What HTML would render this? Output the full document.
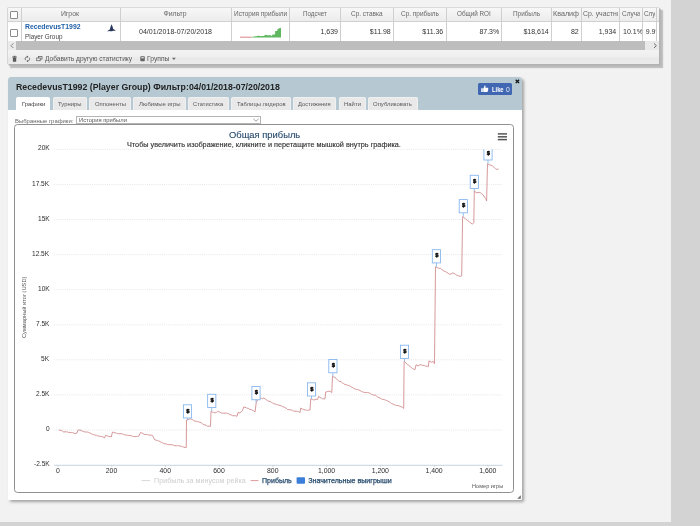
<!DOCTYPE html>
<html><head><meta charset="utf-8"><title>stats</title>
<style>
html,body{margin:0;padding:0;}
body{width:700px;height:526px;position:relative;overflow:hidden;background:#d3d3d3;font-family:"Liberation Sans",sans-serif;}
.t{position:absolute;white-space:nowrap;transform-origin:0 50%;}
.r{position:absolute;}
#w{position:absolute;left:0;top:0;width:700px;height:526px;will-change:transform;}
</style></head><body>
<div id="w">
<div class="r" style="left:0.00px;top:0.00px;width:671.00px;height:521.70px;background:#f2f2f2;"></div>
<div class="r" style="left:7.30px;top:6.70px;width:652.10px;height:57.70px;background:#ececec;border-top:1px solid #dadada;border-left:1px solid #d6d6d6;box-sizing:border-box;border-radius:1.5px 0 0 0;box-shadow:1.6px 1.6px 0.3px #b2b2b2,3.2px 3.2px 1.2px #bcbcbc;"></div>
<div class="r" style="left:8.00px;top:7.80px;width:651.40px;height:14.10px;background:linear-gradient(#f7f7f7,#ececec);border-bottom:1px solid #d0d0d0;box-sizing:border-box;"></div>
<div class="r" style="left:8.00px;top:21.90px;width:651.40px;height:19.20px;background:#fff;"></div>
<div class="r" style="left:8.00px;top:41.10px;width:651.40px;height:8.70px;background:#bdbdbd;"></div>
<div class="r" style="left:8.00px;top:41.10px;width:8.40px;height:8.70px;background:#ebebeb;"></div>
<div class="r" style="left:644.80px;top:41.10px;width:14.60px;height:8.70px;background:#e9e9e9;"></div>
<div class="r" style="left:8.00px;top:49.80px;width:651.40px;height:14.60px;background:linear-gradient(#f3f3f3 0%,#eeeeee 50%,#e8e8e8 58%,#ebebeb 100%);"></div>
<div class="r" style="left:20.90px;top:8.00px;width:1.00px;height:33.00px;background:#cfcfcf;"></div>
<div class="r" style="left:119.50px;top:8.00px;width:1.00px;height:33.00px;background:#cfcfcf;"></div>
<div class="r" style="left:230.80px;top:8.00px;width:1.00px;height:33.00px;background:#cfcfcf;"></div>
<div class="r" style="left:289.00px;top:8.00px;width:1.00px;height:33.00px;background:#cfcfcf;"></div>
<div class="r" style="left:339.50px;top:8.00px;width:1.00px;height:33.00px;background:#cfcfcf;"></div>
<div class="r" style="left:392.50px;top:8.00px;width:1.00px;height:33.00px;background:#cfcfcf;"></div>
<div class="r" style="left:445.75px;top:8.00px;width:1.00px;height:33.00px;background:#cfcfcf;"></div>
<div class="r" style="left:500.75px;top:8.00px;width:1.00px;height:33.00px;background:#cfcfcf;"></div>
<div class="r" style="left:550.75px;top:8.00px;width:1.00px;height:33.00px;background:#cfcfcf;"></div>
<div class="r" style="left:580.75px;top:8.00px;width:1.00px;height:33.00px;background:#cfcfcf;"></div>
<div class="r" style="left:619.00px;top:8.00px;width:1.00px;height:33.00px;background:#cfcfcf;"></div>
<div class="r" style="left:642.00px;top:8.00px;width:1.00px;height:33.00px;background:#cfcfcf;"></div>
<div class="r" style="left:655.90px;top:8.00px;width:1.00px;height:33.00px;background:#cfcfcf;"></div>
<div class="r" style="left:10.10px;top:11.00px;width:7.90px;height:7.80px;background:#fff;border:1px solid #8c8c8c;box-sizing:border-box;border-radius:1px;"></div>
<div class="r" style="left:10.10px;top:29.00px;width:7.90px;height:7.80px;background:#fff;border:1px solid #8c8c8c;box-sizing:border-box;border-radius:1px;"></div>
<div class="t" style="left:60.91px;top:10.33px;font-size:6.9px;line-height:7.93px;color:#666;">Игрок</div>
<div class="t" style="left:163.41px;top:10.33px;font-size:6.9px;line-height:7.93px;color:#666;">Фильтр</div>
<div class="t" style="left:233.75px;top:10.33px;font-size:6.9px;line-height:7.93px;color:#666;transform:scaleX(0.9359);">История прибыли</div>
<div class="t" style="left:303.00px;top:10.33px;font-size:6.9px;line-height:7.93px;color:#666;transform:scaleX(0.9088);">Подсчет</div>
<div class="t" style="left:351.00px;top:10.33px;font-size:6.9px;line-height:7.93px;color:#666;transform:scaleX(0.9348);">Ср. ставка</div>
<div class="t" style="left:400.50px;top:10.33px;font-size:6.9px;line-height:7.93px;color:#666;transform:scaleX(0.9356);">Ср. прибыль</div>
<div class="t" style="left:456.75px;top:10.33px;font-size:6.9px;line-height:7.93px;color:#666;transform:scaleX(0.9149);">Общий ROI</div>
<div class="t" style="left:513.00px;top:10.33px;font-size:6.9px;line-height:7.93px;color:#666;transform:scaleX(0.9252);">Прибыль</div>
<div class="t" style="left:553.00px;top:10.33px;font-size:6.9px;line-height:7.93px;color:#666;transform:scaleX(1.0396);width:25.49px;overflow:hidden;white-space:nowrap;">Квалифи</div>
<div class="t" style="left:583.00px;top:10.33px;font-size:6.9px;line-height:7.93px;color:#666;width:34.83px;overflow:hidden;white-space:nowrap;">Ср. участни</div>
<div class="t" style="left:622.00px;top:10.33px;font-size:6.9px;line-height:7.93px;color:#666;transform:scaleX(0.9351);width:19.04px;overflow:hidden;white-space:nowrap;">Случа</div>
<div class="t" style="left:644.25px;top:10.33px;font-size:6.9px;line-height:7.93px;color:#666;transform:scaleX(0.9219);width:11.50px;overflow:hidden;white-space:nowrap;">Случ</div>
<div class="t" style="left:25.00px;top:23.08px;font-size:7.0px;line-height:8.05px;color:#1f5fa8;font-weight:bold;transform:scaleX(0.9768);">RecedevusT1992</div>
<div class="t" style="left:25.00px;top:33.20px;font-size:6.6px;line-height:7.59px;color:#444;transform:scaleX(0.9644);">Player Group</div>
<div class="t" style="left:139.00px;top:27.68px;font-size:7.0px;line-height:8.05px;color:#333;transform:scaleX(1.0083);">04/01/2018-07/20/2018</div>
<div class="t" style="left:320.48px;top:27.68px;font-size:7.0px;line-height:8.05px;color:#333;">1,639</div>
<div class="t" style="left:369.86px;top:27.68px;font-size:7.0px;line-height:8.05px;color:#333;">$11.98</div>
<div class="t" style="left:422.36px;top:27.68px;font-size:7.0px;line-height:8.05px;color:#333;">$11.36</div>
<div class="t" style="left:479.40px;top:27.68px;font-size:7.0px;line-height:8.05px;color:#333;">87.3%</div>
<div class="t" style="left:523.45px;top:27.68px;font-size:7.0px;line-height:8.05px;color:#333;">$18,614</div>
<div class="t" style="left:570.96px;top:27.68px;font-size:7.0px;line-height:8.05px;color:#333;">82</div>
<div class="t" style="left:598.73px;top:27.68px;font-size:7.0px;line-height:8.05px;color:#333;">1,934</div>
<div class="t" style="left:623.25px;top:27.68px;font-size:7.0px;line-height:8.05px;color:#333;transform:scaleX(1.0076);width:18.56px;overflow:hidden;white-space:nowrap;">10.1%</div>
<div class="t" style="left:645.75px;top:27.68px;font-size:7.0px;line-height:8.05px;color:#333;width:10.17px;overflow:hidden;white-space:nowrap;">9.9%</div>
<svg class="r" style="left:8px;top:40.8px" width="651" height="9.2" viewBox="0 0 651 9.2"><path d="M4.9 2.4 L2.6 4.7 L4.9 7" fill="none" stroke="#777" stroke-width="0.9"/><path d="M646.4 2.4 L648.8 4.7 L646.4 7" fill="none" stroke="#6c6c6c" stroke-width="1"/></svg>
<svg class="r" style="left:106.5px;top:23.5px" width="9" height="9" viewBox="0 0 9 9"><path d="M4.6 0.3 C5.4 2 6 3.6 6.2 5 C7.2 5.4 8.2 6 8.8 6.8 C7.4 6.5 6.4 6.6 5.6 7 C4.8 7.4 3.6 7.5 2.8 7.2 C2 7 1 7.2 0.2 7.6 C0.8 6.6 1.8 5.8 2.8 5.4 C3.2 3.6 3.8 1.8 4.6 0.3 Z" fill="#2a3a5e"/></svg>
<svg class="r" style="left:230px;top:20px" width="65" height="25" viewBox="230 20 65 25"><rect x="240" y="36.7" width="11.5" height="0.9" fill="#d6777b"/><path d="M251.5 37.6 L251.5 36.9 L254 36.5 L257.8 36.1 L258.3 35.2 L258.8 36 L264 36 L265 35 L266 34.8 L267 35.3 L270.8 35.3 L271.5 36 L272.2 35.6 L272.5 34.4 L275 34.4 L275.2 31 L277.3 31 L277.5 29.2 L278.5 28.7 L279.3 28.3 L281 27.8 L281 37.6 Z" fill="#5fb760"/></svg>
<svg class="r" style="left:8px;top:50px" width="300" height="15" viewBox="8 50 300 15"><path d="M12.3 56.6 h4.5 v0.9 h-4.5z M12.9 57.8 h3.3 v4 h-3.3z M13.8 55.8 h1.5 v0.8 h-1.5z" fill="#5a5a5a"/><path d="M25.6 60.2 a2.2 2.2 0 0 1 1.6 -3.5" fill="none" stroke="#5a5a5a" stroke-width="0.8"/><path d="M29.2 57.6 a2.2 2.2 0 0 1 -1.6 3.5" fill="none" stroke="#5a5a5a" stroke-width="0.8"/><path d="M26.9 55.5 l1.5 1.2 l-1.5 1.2z M27.9 62.3 l-1.5 -1.2 l1.5 -1.2z" fill="#5a5a5a"/><rect x="38.5" y="56.4" width="3.5" height="2.7" fill="none" stroke="#666" stroke-width="0.8"/><rect x="36.7" y="58" width="3.5" height="2.7" fill="#eee" stroke="#666" stroke-width="0.8"/><rect x="140.3" y="56.2" width="4.5" height="5" rx="0.8" fill="#666"/><rect x="141.3" y="57.2" width="2.5" height="1.1" fill="#eee"/><path d="M172 57.8 h3.8 l-1.9 2.1z" fill="#666"/></svg>
<div class="t" style="left:45.30px;top:54.73px;font-size:6.9px;line-height:7.93px;color:#555;transform:scaleX(0.9588);">Добавить другую статистику</div>
<div class="t" style="left:146.50px;top:54.73px;font-size:6.9px;line-height:7.93px;color:#555;transform:scaleX(0.9787);">Группы</div>
<div class="r" style="left:7.70px;top:76.80px;width:514.50px;height:422.80px;background:#fff;border-radius:3px 3px 1.5px 1.5px;box-shadow:2px 2px 3px rgba(0,0,0,0.32);"></div>
<div class="r" style="left:7.70px;top:76.80px;width:514.50px;height:33.30px;background:#b6c9d2;border-radius:3px 3px 0 0;"></div>
<div class="t" style="left:16.20px;top:82.04px;font-size:9.5px;line-height:10.92px;color:#222;font-weight:bold;transform:scaleX(0.9248);">RecedevusT1992 (Player Group) Фильтр:04/01/2018-07/20/2018</div>
<svg class="r" style="left:514.2px;top:78.2px" width="7" height="7" viewBox="0 0 7 7"><path d="M1.7 1.7 L5.1 5.1 M5.1 1.7 L1.7 5.1" stroke="#111" stroke-width="1.3"/></svg>
<div class="r" style="left:478.10px;top:83.40px;width:33.90px;height:11.40px;background:#4267b2;border-radius:1.5px;"></div>
<svg class="r" style="left:481px;top:85.2px" width="7.6" height="7.6" viewBox="0 0 16 16"><path d="M0.5 7 h3.2 v8 h-3.2z M4.6 7.2 C6.4 5.6 7.2 3.6 7.4 1 C8.8 0.6 9.8 1.8 9.6 3.4 L9.2 6 H14 C15.4 6 15.6 7.4 15 8.2 C15.6 9 15.4 10 14.8 10.6 C15.2 11.4 14.8 12.4 14.2 12.8 C14.4 14 13.6 15 12.4 15 H7.4 C6.2 15 5.4 14.4 4.6 14.2 Z" fill="#fff"/></svg>
<div class="t" style="left:492.00px;top:86.38px;font-size:6.3px;line-height:7.24px;color:#fff;font-weight:bold;transform:scaleX(0.9202);">Like</div>
<div class="t" style="left:505.80px;top:86.13px;font-size:6.9px;line-height:7.93px;color:#e8ecf6;transform:scaleX(0.9902);">0</div>
<div class="r" style="left:16.30px;top:97.10px;width:33.80px;height:14.40px;background:#fff;border-radius:2px 2px 0 0;"></div>
<div class="t" style="left:21.55px;top:100.14px;font-size:6.2px;line-height:7.13px;color:#444;transform:scaleX(0.9454);">Графики</div>
<div class="r" style="left:53.00px;top:96.80px;width:34.00px;height:13.00px;background:#e9e9e9;border-radius:2px 2px 0 0;border:1px solid #eef0f1;border-bottom:none;box-sizing:border-box;"></div>
<div class="t" style="left:58.25px;top:100.14px;font-size:6.2px;line-height:7.13px;color:#585858;transform:scaleX(0.9511);">Турниры</div>
<div class="r" style="left:89.40px;top:96.80px;width:41.60px;height:13.00px;background:#e9e9e9;border-radius:2px 2px 0 0;border:1px solid #eef0f1;border-bottom:none;box-sizing:border-box;"></div>
<div class="t" style="left:94.65px;top:100.14px;font-size:6.2px;line-height:7.13px;color:#585858;transform:scaleX(0.9546);">Оппоненты</div>
<div class="r" style="left:133.25px;top:96.80px;width:52.25px;height:13.00px;background:#e9e9e9;border-radius:2px 2px 0 0;border:1px solid #eef0f1;border-bottom:none;box-sizing:border-box;"></div>
<div class="t" style="left:138.50px;top:100.14px;font-size:6.2px;line-height:7.13px;color:#585858;transform:scaleX(0.9653);">Любимые игры</div>
<div class="r" style="left:188.00px;top:96.80px;width:40.75px;height:13.00px;background:#e9e9e9;border-radius:2px 2px 0 0;border:1px solid #eef0f1;border-bottom:none;box-sizing:border-box;"></div>
<div class="t" style="left:193.25px;top:100.14px;font-size:6.2px;line-height:7.13px;color:#585858;transform:scaleX(0.9290);">Статистика</div>
<div class="r" style="left:231.25px;top:96.80px;width:59.25px;height:13.00px;background:#e9e9e9;border-radius:2px 2px 0 0;border:1px solid #eef0f1;border-bottom:none;box-sizing:border-box;"></div>
<div class="t" style="left:236.50px;top:100.14px;font-size:6.2px;line-height:7.13px;color:#585858;transform:scaleX(0.9489);">Таблицы лидеров</div>
<div class="r" style="left:293.00px;top:96.80px;width:43.25px;height:13.00px;background:#e9e9e9;border-radius:2px 2px 0 0;border:1px solid #eef0f1;border-bottom:none;box-sizing:border-box;"></div>
<div class="t" style="left:298.25px;top:100.14px;font-size:6.2px;line-height:7.13px;color:#585858;transform:scaleX(0.9368);">Достижения</div>
<div class="r" style="left:338.75px;top:96.80px;width:27.50px;height:13.00px;background:#e9e9e9;border-radius:2px 2px 0 0;border:1px solid #eef0f1;border-bottom:none;box-sizing:border-box;"></div>
<div class="t" style="left:344.00px;top:100.14px;font-size:6.2px;line-height:7.13px;color:#585858;transform:scaleX(0.9609);">Найти</div>
<div class="r" style="left:368.00px;top:96.80px;width:49.50px;height:13.00px;background:#e9e9e9;border-radius:2px 2px 0 0;border:1px solid #eef0f1;border-bottom:none;box-sizing:border-box;"></div>
<div class="t" style="left:373.25px;top:100.14px;font-size:6.2px;line-height:7.13px;color:#585858;transform:scaleX(0.9620);">Опубликовать</div>
<div class="t" style="left:15.10px;top:117.61px;font-size:5.9px;line-height:6.79px;color:#666;transform:scaleX(1.0056);">Выбранные графики:</div>
<div class="r" style="left:76.20px;top:115.80px;width:185.30px;height:8.20px;background:#fff;border:1px solid #b5b5b5;box-sizing:border-box;"></div>
<div class="t" style="left:78.50px;top:117.21px;font-size:5.9px;line-height:6.79px;color:#555;transform:scaleX(0.9867);">История прибыли</div>
<svg class="r" style="left:252px;top:117px" width="8" height="6" viewBox="0 0 8 6"><path d="M1.4 1.8 L4 4.2 L6.6 1.8" fill="none" stroke="#777" stroke-width="0.7"/></svg>
<div class="r" style="left:13.90px;top:124.10px;width:500.00px;height:368.60px;background:#fff;border:1px solid #909090;box-sizing:border-box;border-radius:3.5px;"></div>
<svg class="r" style="left:517.2px;top:495px" width="4" height="4" viewBox="0 0 4 4"><path d="M3.8 0.2 L3.8 3.8 L0.2 3.8 Z" fill="#6a6a6a"/></svg>
<svg class="r" style="left:0;top:0" width="700" height="526" viewBox="0 0 700 526"><defs><clipPath id="pc"><rect x="54" y="149.2" width="449" height="316"/></clipPath></defs><line x1="54" y1="149.4" x2="502.5" y2="149.4" stroke="#d2d2d2" stroke-width="0.7" stroke-dasharray="0.7 1.2"/><line x1="54" y1="184.47" x2="502.5" y2="184.47" stroke="#d2d2d2" stroke-width="0.7" stroke-dasharray="0.7 1.2"/><line x1="54" y1="219.54000000000002" x2="502.5" y2="219.54000000000002" stroke="#d2d2d2" stroke-width="0.7" stroke-dasharray="0.7 1.2"/><line x1="54" y1="254.61" x2="502.5" y2="254.61" stroke="#d2d2d2" stroke-width="0.7" stroke-dasharray="0.7 1.2"/><line x1="54" y1="289.68" x2="502.5" y2="289.68" stroke="#d2d2d2" stroke-width="0.7" stroke-dasharray="0.7 1.2"/><line x1="54" y1="324.75" x2="502.5" y2="324.75" stroke="#d2d2d2" stroke-width="0.7" stroke-dasharray="0.7 1.2"/><line x1="54" y1="359.82000000000005" x2="502.5" y2="359.82000000000005" stroke="#d2d2d2" stroke-width="0.7" stroke-dasharray="0.7 1.2"/><line x1="54" y1="394.89" x2="502.5" y2="394.89" stroke="#d2d2d2" stroke-width="0.7" stroke-dasharray="0.7 1.2"/><line x1="54" y1="429.96000000000004" x2="502.5" y2="429.96000000000004" stroke="#d2d2d2" stroke-width="0.7" stroke-dasharray="0.7 1.2"/><line x1="54" y1="465.03" x2="502.5" y2="465.03" stroke="#d2d2d2" stroke-width="0.7" stroke-dasharray="0.7 1.2"/><line x1="54" y1="465.4" x2="502.5" y2="465.4" stroke="#c0d0e0" stroke-width="0.8"/><line x1="58.0" y1="465" x2="58.0" y2="467" stroke="#c0d0e0" stroke-width="0.7"/><line x1="111.75" y1="465" x2="111.75" y2="467" stroke="#c0d0e0" stroke-width="0.7"/><line x1="165.5" y1="465" x2="165.5" y2="467" stroke="#c0d0e0" stroke-width="0.7"/><line x1="219.25" y1="465" x2="219.25" y2="467" stroke="#c0d0e0" stroke-width="0.7"/><line x1="273.0" y1="465" x2="273.0" y2="467" stroke="#c0d0e0" stroke-width="0.7"/><line x1="326.75" y1="465" x2="326.75" y2="467" stroke="#c0d0e0" stroke-width="0.7"/><line x1="380.5" y1="465" x2="380.5" y2="467" stroke="#c0d0e0" stroke-width="0.7"/><line x1="434.25" y1="465" x2="434.25" y2="467" stroke="#c0d0e0" stroke-width="0.7"/><line x1="488.0" y1="465" x2="488.0" y2="467" stroke="#c0d0e0" stroke-width="0.7"/><polyline fill="none" stroke="#d08689" stroke-width="0.85" stroke-linejoin="round" points="58.75,430 60.0,430.34 61.25,430.53 62.5,431.16 63.75,432 65.0,431.74 66.25,431.9 67.5,431.9 68.75,432.5 70.0,432.35 71.25,432.61 72.5,432.7 73.75,432.95 75,433.75 77,433 78,430 79.5,430.03 81.0,430.28 82.5,431.25 83.75,431.47 85.0,432.06 86.25,432.01 87.5,432.06 88.75,432.46 90,433 91.25,433.81 92.5,434.28 93.75,434.6 95.0,435.18 96.25,435.17 97.5,435.9 98.75,436.12 100,436.25 101.5,436.51 103.0,436.87 104.5,438 105.5,435.5 106.94,435.7 108.38,436.36 109.81,436.45 111.25,437 112.5,432 113.75,432.42 115.0,432.9 116.25,433.13 117.5,433.53 118.75,433.75 120.0,433.61 121.25,433.7 122.5,433.95 123.75,434.36 125,435 126.25,435.14 127.5,435.18 128.75,435.47 130.0,435.64 131.25,435.66 132.5,436.25 133.75,436.51 135.0,436.69 136.25,436.46 137.5,436.53 138.75,436.25 140.5,432.5 141.94,433.02 143.38,433.86 144.81,434.55 146.25,434.5 147.5,434.51 148.75,435.14 150.0,435.0 151.25,435.12 152.5,435.5 153.75,437.98 155,440 156.25,440.19 157.5,440.68 158.75,440.95 160.0,441.6 161.25,442.34 162.5,443 163.75,443.32 165.0,443.9 166.25,443.99 167.5,444.41 168.75,444.75 170,444.5 171.25,444.74 172.5,444.87 173.75,445.34 175.0,445.72 176.25,445.86 177.5,445.5 178.75,445.95 180.0,445.85 181.25,446.33 182.5,446.77 183.75,447 185.0,447.69 186.25,447.5 186.5,420 188.25,419.66 190,418.75 191.25,419.18 192.5,419.7 193.75,420.48 195,421.25 196.25,421.24 197.5,421.62 198.75,421.95 200.0,422.37 201.25,422.78 202.5,423.75 203.75,424.62 205.0,424.91 206.25,425.31 207.5,426.25 209.0,426.15 210.5,426.25 211,411.25 212.33,412.17 213.67,412.37 215,413 216.25,412.37 217.5,411.83 218.75,411.25 220.0,412.18 221.25,412.97 222.5,413 223.75,413.33 225.0,413.13 226.25,413 227.5,413.42 228.75,413.8 230.0,414.64 231.25,415 232.69,415.72 234.12,415.72 235.56,415.74 237,416.25 238,412.5 240,413 241.25,411.51 242.5,410.5 243.75,407 245.0,407.26 246.25,407.75 247.5,408.33 248.75,408.61 250,409.5 251.25,409.68 252.5,410.23 253.75,410.82 255,412 256.25,402.5 257.5,400 258.75,399.06 260,398 261.25,398.41 262.5,398.55 263.75,398 265.0,398.83 266.25,399.74 267.5,400.72 268.75,401.25 270.0,401.35 271.25,402.21 272.5,402.96 273.75,403.8 275,403.75 276.25,404.46 277.5,404.8 278.75,405.14 280,405.5 281.25,405.81 282.5,406.6 283.75,406.95 285.0,407.62 286.25,408.28 287.5,409.5 288.75,409.55 290.0,409.75 291.25,410.0 292.5,410.35 293.75,411.25 295.0,411.19 296.25,411.2 297.5,411.45 298.75,411.7 300,412.5 300.75,408 302.25,409.09 303.75,409.5 305.0,409.94 306.25,409.95 307.5,410.5 308.75,410.03 310,410 310.75,398.75 312.25,399.24 313.75,400 315.0,399.71 316.25,399.2 317.5,399.5 318.75,396.25 320.0,397.44 321.25,398 322.5,398.69 323.75,398.91 325,398.75 325.75,392 327.25,391.61 328.75,391.25 330.25,391.5 331.75,392.5 332.5,376.25 333.75,376.83 335.0,377.63 336.25,378.51 337.5,380 338.75,381.05 340.0,381.49 341.25,381.81 342.5,382.97 343.75,383.74 345,384.5 346.25,384.68 347.5,385.22 348.75,385.45 350.0,385.98 351.25,386.91 352.5,387.5 353.75,388.33 355.0,389.0 356.25,389.29 357.5,389.67 358.75,389.87 360,390.5 361.27,391.31 362.53,391.91 363.8,392.2 365.07,392.58 366.33,392.56 367.6,392.6 368.87,392.77 370.13,393.46 371.4,394.32 372.67,394.82 373.93,395.23 375.2,395.1 376.47,396.12 377.73,397.07 379.0,397.56 380.27,398.31 381.53,398.91 382.8,399.5 384.07,399.61 385.33,400.02 386.6,400.55 387.87,401.08 389.13,401.79 390.4,402.7 391.67,403.58 392.93,404.0 394.2,404.65 395.47,405.12 396.73,405.58 398,405.5 399.43,406.1 400.85,406.58 402.27,407.12 403.7,408.4 404.1,361.4 405.8,362.78 407.5,364.7 408.77,365.37 410.03,366.41 411.3,367.5 412.57,368.49 413.83,369.32 415.1,369.4 416.1,364.7 418,366 419.9,364.7 421.47,364.98 423.03,365.42 424.6,365.6 425.87,366.2 427.13,366.16 428.4,366.6 429,360.9 431.3,362.2 433.2,361.4 434.5,363.7 435.5,266.8 437.13,267.44 438.77,268.31 440.4,268.3 441.93,269.55 443.47,270.78 445,271.3 446.5,272.31 448.0,273.06 449.5,274.4 451.05,273.91 452.6,272.9 454.1,273.5 455.6,274.4 457.1,275.42 458.6,275.9 460.15,276.32 461.7,275.9 462.6,216.6 463.9,217.51 465.2,218.42 466.5,219.82 467.8,220.6 469.3,222.0 470.8,222.91 472.3,224.2 473.8,222.7 474.3,190.7 476.3,193 478.05,192.41 479.8,192.5 481.5,193.44 483.2,195 484.45,197.06 485.7,198.4 486.6,201 487.5,163.8 489.2,164.73 490.9,165.1 492.6,166.03 494.3,167.6 495.6,168.79 496.9,169.4 498.6,169"/><g clip-path="url(#pc)"><line x1="187.5" y1="418.0" x2="187.5" y2="420" stroke="#7fb0ea" stroke-width="0.8"/><rect x="183.4" y="404.8" width="8.2" height="13.2" fill="#fff" stroke="#82b3ee" stroke-width="0.85"/><text x="187.9" y="412.5" font-family="Liberation Sans" font-weight="bold" font-size="5.9" fill="#000" stroke="#000" stroke-width="0.35" text-anchor="middle">$</text><line x1="211.75" y1="407.5" x2="211.75" y2="411.25" stroke="#7fb0ea" stroke-width="0.8"/><rect x="207.65" y="394.3" width="8.2" height="13.2" fill="#fff" stroke="#82b3ee" stroke-width="0.85"/><text x="212.15" y="402.0" font-family="Liberation Sans" font-weight="bold" font-size="5.9" fill="#000" stroke="#000" stroke-width="0.35" text-anchor="middle">$</text><line x1="256" y1="399.75" x2="256" y2="402.5" stroke="#7fb0ea" stroke-width="0.8"/><rect x="251.9" y="386.55" width="8.2" height="13.2" fill="#fff" stroke="#82b3ee" stroke-width="0.85"/><text x="256.4" y="394.25" font-family="Liberation Sans" font-weight="bold" font-size="5.9" fill="#000" stroke="#000" stroke-width="0.35" text-anchor="middle">$</text><line x1="311.5" y1="396.0" x2="311.5" y2="398.75" stroke="#7fb0ea" stroke-width="0.8"/><rect x="307.4" y="382.8" width="8.2" height="13.2" fill="#fff" stroke="#82b3ee" stroke-width="0.85"/><text x="311.9" y="390.5" font-family="Liberation Sans" font-weight="bold" font-size="5.9" fill="#000" stroke="#000" stroke-width="0.35" text-anchor="middle">$</text><line x1="332.9" y1="372.75" x2="332.9" y2="376.25" stroke="#7fb0ea" stroke-width="0.8"/><rect x="328.79999999999995" y="359.55" width="8.2" height="13.2" fill="#fff" stroke="#82b3ee" stroke-width="0.85"/><text x="333.29999999999995" y="367.25" font-family="Liberation Sans" font-weight="bold" font-size="5.9" fill="#000" stroke="#000" stroke-width="0.35" text-anchor="middle">$</text><line x1="404.5" y1="358.4" x2="404.5" y2="361.4" stroke="#7fb0ea" stroke-width="0.8"/><rect x="400.4" y="345.2" width="8.2" height="13.2" fill="#fff" stroke="#82b3ee" stroke-width="0.85"/><text x="404.9" y="352.9" font-family="Liberation Sans" font-weight="bold" font-size="5.9" fill="#000" stroke="#000" stroke-width="0.35" text-anchor="middle">$</text><line x1="436.4" y1="262.9" x2="436.4" y2="266.8" stroke="#7fb0ea" stroke-width="0.8"/><rect x="432.29999999999995" y="249.70000000000002" width="8.2" height="13.2" fill="#fff" stroke="#82b3ee" stroke-width="0.85"/><text x="436.79999999999995" y="257.4" font-family="Liberation Sans" font-weight="bold" font-size="5.9" fill="#000" stroke="#000" stroke-width="0.35" text-anchor="middle">$</text><line x1="463.3" y1="212.8" x2="463.3" y2="216.6" stroke="#7fb0ea" stroke-width="0.8"/><rect x="459.2" y="199.60000000000002" width="8.2" height="13.2" fill="#fff" stroke="#82b3ee" stroke-width="0.85"/><text x="463.7" y="207.3" font-family="Liberation Sans" font-weight="bold" font-size="5.9" fill="#000" stroke="#000" stroke-width="0.35" text-anchor="middle">$</text><line x1="474.3" y1="188.5" x2="474.3" y2="190.7" stroke="#7fb0ea" stroke-width="0.8"/><rect x="470.2" y="175.3" width="8.2" height="13.2" fill="#fff" stroke="#82b3ee" stroke-width="0.85"/><text x="474.7" y="183.0" font-family="Liberation Sans" font-weight="bold" font-size="5.9" fill="#000" stroke="#000" stroke-width="0.35" text-anchor="middle">$</text><line x1="488" y1="160.0" x2="488" y2="163.8" stroke="#7fb0ea" stroke-width="0.8"/><rect x="483.9" y="146.8" width="8.2" height="13.2" fill="#fff" stroke="#82b3ee" stroke-width="0.85"/><text x="488.4" y="154.5" font-family="Liberation Sans" font-weight="bold" font-size="5.9" fill="#000" stroke="#000" stroke-width="0.35" text-anchor="middle">$</text></g><line x1="497.8" y1="133.9" x2="507" y2="133.9" stroke="#555" stroke-width="1.5"/><line x1="497.8" y1="136.8" x2="507" y2="136.8" stroke="#555" stroke-width="1.5"/><line x1="497.8" y1="139.6" x2="507" y2="139.6" stroke="#555" stroke-width="1.5"/><line x1="141.6" y1="480.6" x2="150" y2="480.6" stroke="#d4d4d4" stroke-width="0.9"/><line x1="250.5" y1="480.6" x2="258.5" y2="480.6" stroke="#d98f92" stroke-width="0.9"/><rect x="296.6" y="477.3" width="8.4" height="6.4" rx="1" fill="#3b7fd9"/></svg>
<div class="t" style="left:228.70px;top:129.57px;font-size:9.1px;line-height:10.46px;color:#274b6d;transform:scaleX(1.0308);-webkit-text-stroke:0.12px #274b6d;">Общая прибыль</div>
<div class="t" style="left:126.70px;top:141.32px;font-size:7.1px;line-height:8.16px;color:#333;transform:scaleX(1.0253);-webkit-text-stroke:0.15px #333;">Чтобы увеличить изображение, кликните и перетащите мышкой внутрь графика.</div>
<div class="t" style="left:37.84px;top:144.43px;font-size:6.9px;line-height:7.93px;color:#2e2e2e;transform:scaleX(0.9500);">20K</div>
<div class="t" style="left:32.37px;top:179.50px;font-size:6.9px;line-height:7.93px;color:#2e2e2e;transform:scaleX(0.9500);">17.5K</div>
<div class="t" style="left:37.84px;top:214.57px;font-size:6.9px;line-height:7.93px;color:#2e2e2e;transform:scaleX(0.9500);">15K</div>
<div class="t" style="left:32.37px;top:249.64px;font-size:6.9px;line-height:7.93px;color:#2e2e2e;transform:scaleX(0.9500);">12.5K</div>
<div class="t" style="left:37.84px;top:284.71px;font-size:6.9px;line-height:7.93px;color:#2e2e2e;transform:scaleX(0.9500);">10K</div>
<div class="t" style="left:36.02px;top:319.78px;font-size:6.9px;line-height:7.93px;color:#2e2e2e;transform:scaleX(0.9500);">7.5K</div>
<div class="t" style="left:41.48px;top:354.85px;font-size:6.9px;line-height:7.93px;color:#2e2e2e;transform:scaleX(0.9500);">5K</div>
<div class="t" style="left:36.02px;top:389.92px;font-size:6.9px;line-height:7.93px;color:#2e2e2e;transform:scaleX(0.9500);">2.5K</div>
<div class="t" style="left:45.85px;top:424.99px;font-size:6.9px;line-height:7.93px;color:#2e2e2e;transform:scaleX(0.9500);">0</div>
<div class="t" style="left:33.83px;top:460.06px;font-size:6.9px;line-height:7.93px;color:#2e2e2e;transform:scaleX(0.9500);">-2.5K</div>
<div class="t" style="left:55.88px;top:467.03px;font-size:6.9px;line-height:7.93px;color:#2e2e2e;">0</div>
<div class="t" style="left:105.79px;top:467.03px;font-size:6.9px;line-height:7.93px;color:#2e2e2e;">200</div>
<div class="t" style="left:159.54px;top:467.03px;font-size:6.9px;line-height:7.93px;color:#2e2e2e;">400</div>
<div class="t" style="left:213.29px;top:467.03px;font-size:6.9px;line-height:7.93px;color:#2e2e2e;">600</div>
<div class="t" style="left:267.04px;top:467.03px;font-size:6.9px;line-height:7.93px;color:#2e2e2e;">800</div>
<div class="t" style="left:317.92px;top:467.03px;font-size:6.9px;line-height:7.93px;color:#2e2e2e;">1,000</div>
<div class="t" style="left:371.67px;top:467.03px;font-size:6.9px;line-height:7.93px;color:#2e2e2e;">1,200</div>
<div class="t" style="left:425.42px;top:467.03px;font-size:6.9px;line-height:7.93px;color:#2e2e2e;">1,400</div>
<div class="t" style="left:479.17px;top:467.03px;font-size:6.9px;line-height:7.93px;color:#2e2e2e;">1,600</div>
<div class="t" style="left:471.75px;top:482.24px;font-size:6.2px;line-height:7.13px;color:#555;transform:scaleX(0.9075);">Номер игры</div>
<div class="t" style="left:153.50px;top:477.42px;font-size:7.1px;line-height:8.16px;color:#cdcdcd;transform:scaleX(1.0096);">Прибыль за минусом рейка</div>
<div class="t" style="left:262.00px;top:477.42px;font-size:7.1px;line-height:8.16px;color:#274b6d;transform:scaleX(0.9924);-webkit-text-stroke:0.25px #274b6d;">Прибыль</div>
<div class="t" style="left:308.20px;top:477.42px;font-size:7.1px;line-height:8.16px;color:#274b6d;-webkit-text-stroke:0.25px #274b6d;">Значительные выигрыши</div>
<div class="t" style="left:-5.90px;top:303.50px;font-size:5.6px;line-height:6.6px;color:#555;transform:rotate(-90deg) scaleX(1.0181);transform-origin:50% 50%;">Суммарный итог (USD)</div>
</div>
</body></html>
